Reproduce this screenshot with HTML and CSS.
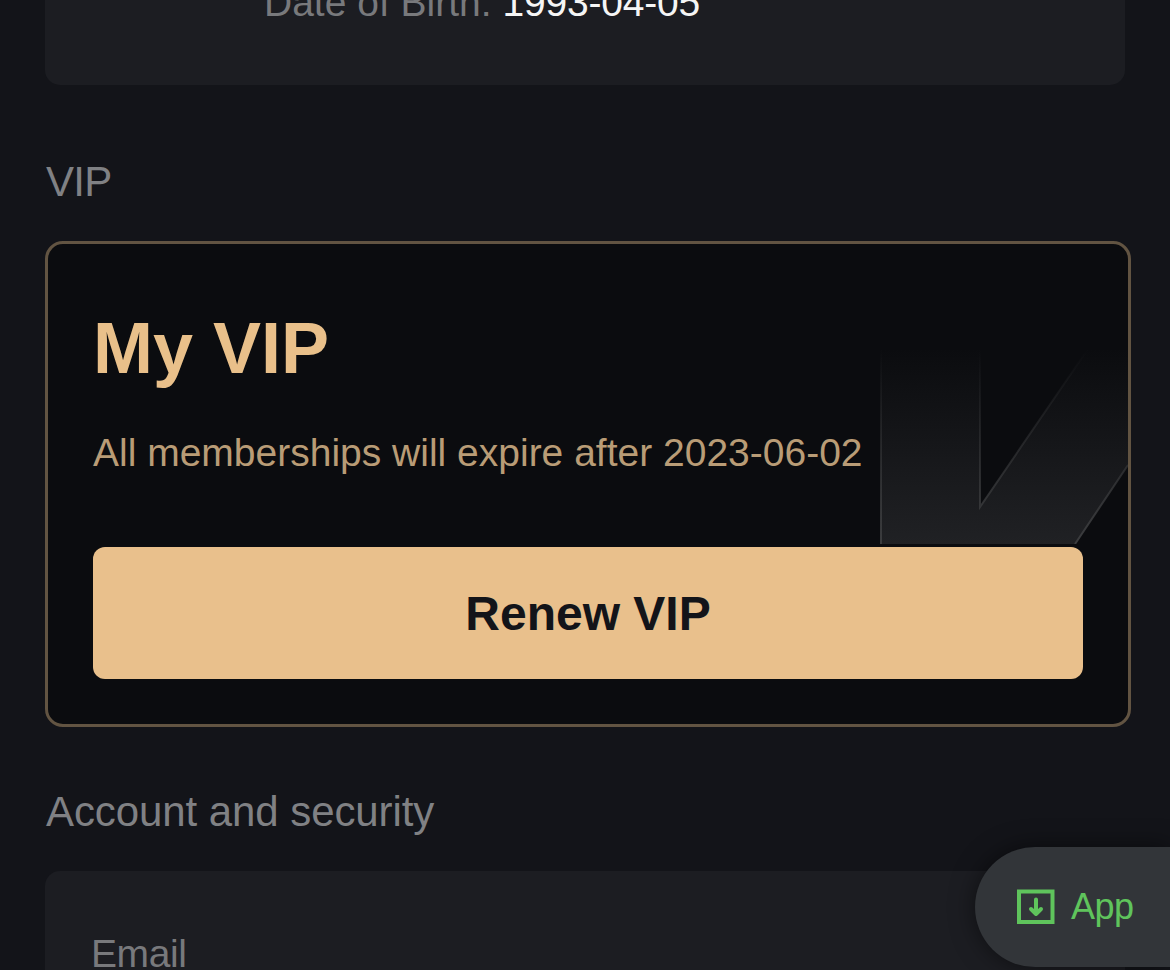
FILE: index.html
```html
<!DOCTYPE html>
<html lang="en">

<head>
    <meta charset="UTF-8">
    <meta name="viewport" content="width=device-width, initial-scale=1.0">
    <title>Account</title>
    <link rel="stylesheet" href="styles.css">
</head>

<body>
    <main class="page">
        <section class="card profile">
            <p><span class="label">Date of Birth:</span> <span class="birth-date">1993-04-05</span></p>
        </section>

        <h2 class="section-title vip-heading">VIP</h2>
        <section class="vip-card">
            <!-- Faded emblem behind the card text -->
            <svg class="vip-mark" width="248" height="195" viewBox="0 0 248 195" fill="none">
                <defs>
                    <linearGradient id="markFill" x1="0" y1="0" x2="0" y2="1">
                        <stop offset="0" stop-color="#202124" stop-opacity="0" />
                        <stop offset="1" stop-color="#202124" />
                    </linearGradient>
                    <linearGradient id="markLine" x1="0" y1="0" x2="0" y2="195" gradientUnits="userSpaceOnUse">
                        <stop offset="0" stop-color="#3b3c3e" stop-opacity="0" />
                        <stop offset="1" stop-color="#3b3c3e" />
                    </linearGradient>
                </defs>
                <path d="M1 0H100V158L208 0H248V116L195 195H1Z" fill="url(#markFill)" />
                <path d="M1 0V195M100 0V158L208 0M248 116L195 195" stroke="url(#markLine)" stroke-width="2" />
            </svg>
            <h1 class="vip-title">My VIP</h1>
            <p class="vip-expiry">All memberships will expire after 2023-06-02</p>
            <button class="renew-btn">Renew VIP</button>
        </section>

        <h2 class="section-title security-heading">Account and security</h2>
        <section class="card security">
            <span class="label">Email</span>
        </section>
    </main>

    <a class="app-btn" href="#">
        <svg width="38" height="36" viewBox="0 0 38 36" fill="none" stroke="currentColor" stroke-width="4">
            <path d="M2 2.5H35.5V33H2Z" />
            <path d="M19 10.5V25M14 20L19 25L24 20" stroke-linecap="round" stroke-linejoin="round" />
        </svg>
        <span>App</span>
    </a>
</body>

</html>
```
FILE: styles.css
```css
* {
    box-sizing: border-box;
}

body {
    margin: 0;
    height: 970px;
    overflow: hidden;
    background-color: #131419;
    color: #808184;
    font-family: "Liberation Sans", Arial, sans-serif;
}

h1,
h2,
p {
    margin: 0;
    font-weight: normal;
}

.page {
    height: 970px;
    padding: 0 39px 0 45px;
    overflow: hidden;
}

/* Grey panels */
.card {
    width: 1080px;
    background-color: #1c1d22;
    border-radius: 15px;
    font-size: 39px;
}

.profile {
    display: flow-root;
    height: 85px;
    padding-left: 219px;
    border-radius: 0 0 15px 15px;
    line-height: 44px;
}

.profile p {
    margin-top: -19px;
}

.label {
    color: #78797c;
}

.birth-date {
    color: #f5f5f5;
    letter-spacing: -0.2px;
}

.section-title {
    font-size: 42px;
    line-height: 48px;
}

.vip-heading {
    padding: 73px 0 35px 1px;
    letter-spacing: -0.7px;
}

/* VIP membership card */
.vip-card {
    position: relative;
    height: 486px;
    padding: 68px 45px 0;
    border: 3px solid #625442;
    border-radius: 18px;
    background-color: #0b0c0f;
}

.vip-mark {
    position: absolute;
    top: 105px;
    right: 0;
}

.vip-title {
    color: #e9c08a;
    font-size: 72px;
    font-weight: bold;
    line-height: 72px;
}

.vip-expiry {
    position: relative;
    margin-top: 47px;
    color: #b99c76;
    font-size: 39px;
    line-height: 44px;
}

.renew-btn {
    position: relative;
    width: 990px;
    height: 132px;
    margin-top: 72px;
    padding-top: 2px;
    border: none;
    border-radius: 12px;
    background-color: #e9c08c;
    color: #131419;
    font-family: inherit;
    font-size: 48px;
    font-weight: bold;
}

.security-heading {
    padding: 61px 0 35px 1px;
    letter-spacing: -0.08px;
}

.security {
    height: 99px;
    padding: 66px 46px 0;
    border-radius: 15px 15px 0 0;
    line-height: 34px;
    letter-spacing: -0.4px;
}

/* Floating app button */
.app-btn {
    position: absolute;
    top: 847px;
    right: 0;
    display: flex;
    align-items: center;
    gap: 16px;
    width: 195px;
    height: 120px;
    padding-left: 42px;
    border-radius: 60px 0 0 60px;
    background-color: #323539;
    box-shadow: 0 0 24px rgba(0, 0, 0, 0.5);
    color: #5fc45c;
    font-size: 36px;
    letter-spacing: -0.5px;
    text-decoration: none;
}
```
